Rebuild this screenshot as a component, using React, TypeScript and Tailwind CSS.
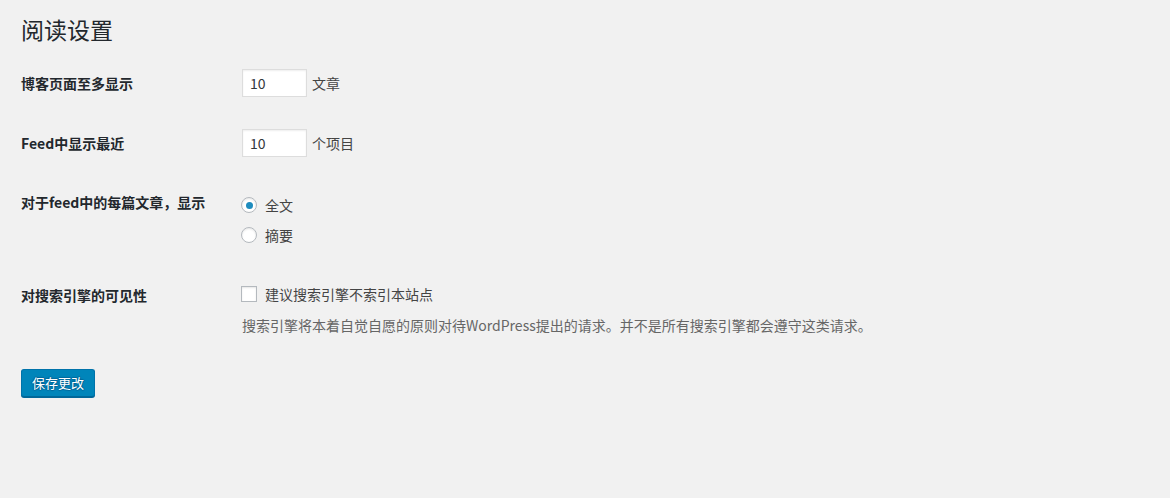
import React from "react";

const font = { fontFamily: '"Noto Sans CJK SC", "Noto Sans", sans-serif' };

const NumberField = ({ value, suffix }: { value: string; suffix: string }) => (
    <div className="flex items-center h-[28px]">
        <div className="w-[65px] h-[28px] bg-white border border-[#ddd] shadow-[inset_0_1px_2px_rgba(0,0,0,0.07)] flex items-center pl-[7px] text-[14px] text-[#32373c]">
            {value}
        </div>
        <span className="ml-[5px] text-[14px] text-[#444]">{suffix}</span>
    </div>
);

const Radio = ({ checked, label }: { checked?: boolean; label: string }) => (
    <div className="flex items-center h-[20px]">
        <span className="w-[16px] h-[16px] rounded-full bg-white border border-[#b4b9be] shadow-[inset_0_1px_2px_rgba(0,0,0,0.1)] flex items-center justify-center">
            {checked && <span className="w-[7px] h-[7px] rounded-full bg-[#1e8cbe]" />}
        </span>
        <span className="ml-[8px] text-[14px] text-[#444]">{label}</span>
    </div>
);

export default function App() {
    return (
        <div className="w-[1170px] h-[498px] bg-[#f1f1f1] pl-[21px] text-[#23282d]" style={font}>
            <h1 className="pt-[14px] text-[23px] leading-[30px] font-normal text-[#23282d]">阅读设置</h1>

            <div className="flex flex-col">
                {/* 博客页面 */}
                <div className="flex items-center mt-[25px]">
                    <div className="w-[221px] text-[14px] font-bold">博客页面至多显示</div>
                    <NumberField value="10" suffix="文章" />
                </div>

                {/* Feed */}
                <div className="flex items-center mt-[32px]">
                    <div className="w-[221px] text-[14px] font-bold">Feed中显示最近</div>
                    <NumberField value="10" suffix="个项目" />
                </div>

                {/* 每篇文章 */}
                <div className="flex items-start mt-[35px]">
                    <div className="w-[221px] text-[14px] leading-[20px] font-bold">对于feed中的每篇文章，显示</div>
                    <div className="flex flex-col gap-[10px] pt-[3px] -ml-[1px]">
                        <Radio checked label="全文" />
                        <Radio label="摘要" />
                    </div>
                </div>

                {/* 可见性 */}
                <div className="flex items-start mt-[39px]">
                    <div className="w-[221px] text-[14px] leading-[20px] font-bold pt-[1px]">对搜索引擎的可见性</div>
                    <div className="flex flex-col">
                        <div className="flex items-center h-[20px] -ml-[1px]">
                            <span className="w-[16px] h-[16px] bg-white border border-[#b4b9be] shadow-[inset_0_1px_2px_rgba(0,0,0,0.1)]" />
                            <span className="ml-[8px] text-[14px] text-[#444]">建议搜索引擎不索引本站点</span>
                        </div>
                        <p className="mt-[11px] text-[14px] leading-[20px] text-[#666]">
                            搜索引擎将本着自觉自愿的原则对待WordPress提出的请求。并不是所有搜索引擎都会遵守这类请求。
                        </p>
                    </div>
                </div>

                <div className="mt-[34px]">
                    <button className="h-[28px] px-[10px] bg-[#0085ba] border border-[#0073aa] border-b-[#006799] rounded-[3px] shadow-[0_1px_0_#006799] text-white text-[13px] leading-[26px] [text-shadow:0_-1px_1px_#006799,1px_0_1px_#006799,0_1px_1px_#006799,-1px_0_1px_#006799]">
                        保存更改
                    </button>
                </div>
            </div>
        </div>
    );
}
